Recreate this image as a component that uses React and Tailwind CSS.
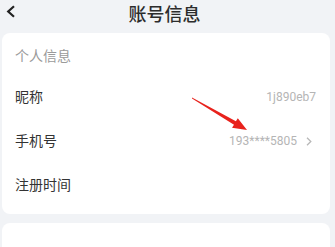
import React from 'react';

const rows = [
    { label: '昵称', value: '1j890eb7' },
    { label: '手机号', value: '193****5805', arrow: true },
    { label: '注册时间', value: '' },
];

const Chevron = () => (
    <svg width="6" height="9" viewBox="0 0 6 9" className="ml-[9px] mr-[4px]">
        <path d="M1 0.8 L4.8 4.5 L1 8.2" fill="none" stroke="#b8b8b8" strokeWidth="1.3" />
    </svg>
);

const App = () => {
    return (
        <div
            className="relative w-[335px] h-[247px] overflow-hidden bg-[#f1f3f6]"
            style={{ fontFamily: 'Roboto, "Noto Sans CJK SC", sans-serif' }}
        >
            <header className="grid grid-cols-[40px_1fr_40px] h-[28px]">
                <div className="pl-[6px] pt-[5px]">
                    <svg width="10" height="13" viewBox="0 0 10 13">
                        <path d="M8 1.2 L2.2 6.5 L8 11.8" fill="none" stroke="#222" strokeWidth="2.2" strokeLinejoin="miter" />
                    </svg>
                </div>
                <h1 className="flex items-center justify-center pr-[6px] pt-[2px] text-[18px] font-medium text-[#2c2c2c] leading-none">
                    账号信息
                </h1>
                <div />
            </header>

            <section className="mt-[5px] ml-[2px] w-[328px] rounded-[8px] bg-white pb-[7px]">
                <div className="h-[42px] pt-[4px] pl-[13px] flex items-center text-[14px] text-[#9a9a9a]">
                    个人信息
                </div>
                {rows.map((row) => (
                    <div key={row.label} className="h-[44px] flex items-center justify-between pl-[13px] pr-[14px]">
                        <span className="text-[14px] text-[#333]">{row.label}</span>
                        <span className="flex items-center text-[12px] text-[#b5b5b5]">
                            {row.value}
                            {row.arrow && <Chevron />}
                        </span>
                    </div>
                ))}
            </section>

            <section className="mt-[9px] ml-[2px] w-[328px] h-[60px] rounded-[8px] bg-white" />

            {/* annotation arrow */}
            <svg className="absolute left-0 top-0 pointer-events-none" width="335" height="247" viewBox="0 0 335 247">
                <polygon
                    points="192,97.5 235.9,121.3 237.8,118.2 247,130 232,127.8 234,124.7 192,98.5"
                    fill="#e8221c"
                />
            </svg>
        </div>
    );
};

export default App;
